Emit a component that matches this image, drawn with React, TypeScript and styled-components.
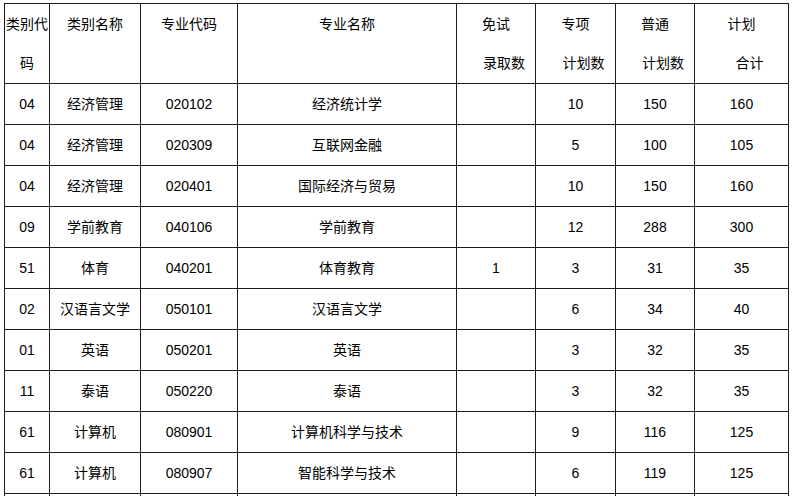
import React from 'react';
import styled, { createGlobalStyle } from 'styled-components';

interface Row {
  typeCode: string;
  typeName: string;
  majorCode: string;
  majorName: string;
  exempt: string;
  special: string;
  normal: string;
  total: string;
}

const ROWS: Row[] = [
  { typeCode: '04', typeName: '经济管理', majorCode: '020102', majorName: '经济统计学', exempt: '', special: '10', normal: '150', total: '160' },
  { typeCode: '04', typeName: '经济管理', majorCode: '020309', majorName: '互联网金融', exempt: '', special: '5', normal: '100', total: '105' },
  { typeCode: '04', typeName: '经济管理', majorCode: '020401', majorName: '国际经济与贸易', exempt: '', special: '10', normal: '150', total: '160' },
  { typeCode: '09', typeName: '学前教育', majorCode: '040106', majorName: '学前教育', exempt: '', special: '12', normal: '288', total: '300' },
  { typeCode: '51', typeName: '体育', majorCode: '040201', majorName: '体育教育', exempt: '1', special: '3', normal: '31', total: '35' },
  { typeCode: '02', typeName: '汉语言文学', majorCode: '050101', majorName: '汉语言文学', exempt: '', special: '6', normal: '34', total: '40' },
  { typeCode: '01', typeName: '英语', majorCode: '050201', majorName: '英语', exempt: '', special: '3', normal: '32', total: '35' },
  { typeCode: '11', typeName: '泰语', majorCode: '050220', majorName: '泰语', exempt: '', special: '3', normal: '32', total: '35' },
  { typeCode: '61', typeName: '计算机', majorCode: '080901', majorName: '计算机科学与技术', exempt: '', special: '9', normal: '116', total: '125' },
  { typeCode: '61', typeName: '计算机', majorCode: '080907', majorName: '智能科学与技术', exempt: '', special: '6', normal: '119', total: '125' },
];

const COL_WIDTHS = [45, 91, 97, 219, 79, 80, 79, 94];

const GlobalStyle = createGlobalStyle`
  html, body {
    margin: 0;
    padding: 0;
    background: #fff;
    overflow: hidden;
  }
  body {
    height: 496px;
    padding: 3px 0 0 4px;
    box-sizing: border-box;
    font-family: "Liberation Sans", "Noto Sans CJK SC", sans-serif;
    color: #000;
  }
`;

const Table = styled.table`
  width: 785px;
  table-layout: fixed;
  border-collapse: collapse;
  font-size: 14px;
`;

const HeadCell = styled.th`
  height: 78px;
  padding: 1px 0 0;
  border: 1px solid #1c1c1c;
  vertical-align: top;
  text-align: center;
  font-weight: normal;
  line-height: 39px;
`;

const SecondLine = styled.span<{ $indent?: boolean }>`
  display: block;
  padding-left: ${(p) => (p.$indent ? '16px' : '0')};
`;

const BodyRow = styled.tr`
  height: 41px;
`;

const Cell = styled.td`
  padding: 0;
  border: 1px solid #1c1c1c;
  text-align: center;
  vertical-align: middle;
  line-height: 20px;
  white-space: nowrap;
`;

export default function App() {
  return (
    <>
      <GlobalStyle />
      <Table>
        <colgroup>
          {COL_WIDTHS.map((w, i) => (
            <col key={i} style={{ width: w }} />
          ))}
        </colgroup>
        <thead>
          <tr>
            <HeadCell>类别代码</HeadCell>
            <HeadCell>类别名称</HeadCell>
            <HeadCell>专业代码</HeadCell>
            <HeadCell>专业名称</HeadCell>
            <HeadCell>
              免试
              <SecondLine $indent>录取数</SecondLine>
            </HeadCell>
            <HeadCell>
              专项
              <SecondLine $indent>计划数</SecondLine>
            </HeadCell>
            <HeadCell>
              普通
              <SecondLine $indent>计划数</SecondLine>
            </HeadCell>
            <HeadCell>
              计划
              <SecondLine $indent>合计</SecondLine>
            </HeadCell>
          </tr>
        </thead>
        <tbody>
          {ROWS.map((r, i) => (
            <BodyRow key={i}>
              <Cell>{r.typeCode}</Cell>
              <Cell>{r.typeName}</Cell>
              <Cell>{r.majorCode}</Cell>
              <Cell>{r.majorName}</Cell>
              <Cell>{r.exempt}</Cell>
              <Cell>{r.special}</Cell>
              <Cell>{r.normal}</Cell>
              <Cell>{r.total}</Cell>
            </BodyRow>
          ))}
          <BodyRow>
            {COL_WIDTHS.map((_, i) => (
              <Cell key={i} />
            ))}
          </BodyRow>
        </tbody>
      </Table>
    </>
  );
}
